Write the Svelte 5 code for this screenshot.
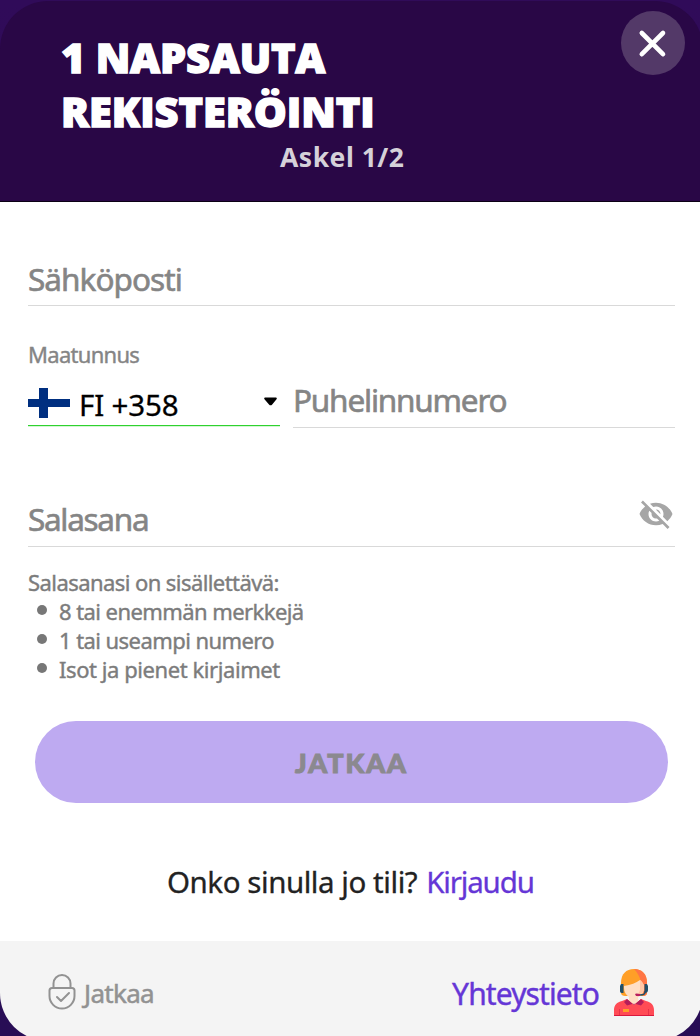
<script>
  const rules = ['8 tai enemmän merkkejä', '1 tai useampi numero', 'Isot ja pienet kirjaimet'];
</script>

<div class="backdrop">
  <main class="card">
    <header>
      <h1><span class="t1">1 NAPSAUTA</span><span class="t2">REKISTERÖINTI</span></h1>
      <p class="step"><span>Askel 1/2</span></p>
      <button class="close" aria-label="Sulje">
        <svg width="64" height="64" viewBox="0 0 64 64"><path d="M20.8 22 42 43.200M42 22 20.800 43.200" stroke="#fff" stroke-width="4.6" stroke-linecap="round" /></svg>
      </button>
    </header>

    <section class="form">
      <div class="field email"><span class="ph e">Sähköposti</span></div>
      <div class="label"><span>Maatunnus</span></div>
      <div class="phone">
        <div class="country">
          <svg class="flag" width="42" height="30" viewBox="0 0 42 30"><path fill="#fff" d="M0 0h42v30H0z" /><path fill="#002f80" d="M11 0h9v30h-9zM0 11h42v8H0z" /></svg>
          <span class="code">FI +358</span>
          <svg class="caret" width="13" height="9" viewBox="0 0 13 9"><path d="M1.6.5h9.800c1.500 0 1.800 1 .9 2L8.200 7.400c-1 1.200-2.200 1.200-3.200 0L.7 2.500c-.9-1-.6-2 .9-2z" /></svg>
        </div>
        <div class="number"><span class="ph n">Puhelinnumero</span></div>
      </div>
      <div class="field password">
        <span class="ph s">Salasana</span>
        <svg class="eye" width="36" height="36" viewBox="0 0 24 24" fill="#a6a6a6"><path d="M12 7c2.76 0 5 2.24 5 5 0 .65-.13 1.26-.36 1.83l2.92 2.92c1.51-1.26 2.7-2.89 3.43-4.75-1.73-4.39-6-7.5-11-7.5-1.4 0-2.74.25-3.98.7l2.16 2.16C10.74 7.13 11.35 7 12 7zM2 4.27l2.28 2.28.46.46C3.08 8.3 1.78 10.02 1 12c1.73 4.39 6 7.5 11 7.5 1.55 0 3.03-.3 4.38-.84l.42.42L19.73 22 21 20.73 3.27 3 2 4.27zM7.53 9.8l1.55 1.55c-.05.21-.08.43-.08.65 0 1.66 1.34 3 3 3 .22 0 .44-.03.65-.08l1.55 1.55c-.67.33-1.41.53-2.2.53-2.76 0-5-2.24-5-5 0-.79.2-1.53.53-2.2zm4.31-.78 3.15 3.15.02-.16c0-1.66-1.34-3-3-3l-.17.01z" /></svg>
      </div>
      <p class="hint"><span>Salasanasi on sisällettävä:</span></p>
      <ul>
        {#each rules as rule}<li><span>{rule}</span></li>{/each}
      </ul>
      <button class="submit"><span>JATKAA</span></button>
      <p class="login"><span class="q">Onko sinulla jo tili?</span><a href="#login">Kirjaudu</a></p>
    </section>

    <footer>
      <div class="continue">
        <svg width="28" height="36" viewBox="0 0 28 36" fill="none" stroke="#929292" stroke-width="2" stroke-linecap="round" stroke-linejoin="round"><path d="M5.5 14V9.5a8.5 8.5 0 0 1 17 0V14M4 14h20q2.500 0 2.500 2.500V22a12.500 12.500 0 0 1-25 0v-5.500Q1.500 14 4 14zM9 23l4 4 8-8" /></svg>
        <span>Jatkaa</span>
      </div>
      <div class="contact">
        <span>Yhteystieto</span>
        <svg width="40" height="48" viewBox="0 0 40 48">
          <path fill="#ff9f27" d="M7 24V14C7 5 12 0 20 0s13 5 13 14v10c0 2-2 3-4 3H11c-2 0-4-1-4-3z" />
          <path fill="#ff7544" d="M20 0c8 0 13 5 13 14v10c0 2-2 3-4 3l-2-14c-1-5-4-10-7-13z" />
          <path fill="#ffdfc4" d="M10 17c7-1 12-3 16-6 1 2 4 4 4 6v2c0 5-3 8-6 9v6l-4 5-5-5v-6c-3-2-5-5-5-9z" />
          <path fill="#ffc6a5" d="M26 11c2 1 4 4 4 7 0 5-3 9-7 10l3-7z" />
          <path fill="#224f68" d="M7 15h2.500v9H8c-2 0-2-1-2-3v-4zM30.500 15H33l1 2v4c0 2-1 3-3.500 3z" />
          <path fill="none" stroke="#224f68" stroke-width="1.5" d="M31 22v1c0 2-2 3-5 3" />
          <path fill="#b9205f" d="M21 25q1-1 5 0v2h-4z" />
          <path fill="#ff4b55" d="M0 47V41c0-5 3-8 8-9l5-2 7 6 7-6 5 2c5 1 8 4 8 9v6z" />
          <path fill="#d9183d" d="M0 46h40v1H0z" />
          <path fill="#e8324a" d="M5 40h1v6H5zM34 40h1v6h-1z" />
          <path fill="#b51d5a" d="m13 30 7 6 7-6 3 3-3 3.500-7-2-7 2-3-3.500z" />
          <path fill="#ffdfc4" d="M15 30h10l-5 5z" />
          <path fill="#ff9f27" d="M9 40h6v3H9z" />
        </svg>
      </div>
    </footer>
  </main>
</div>

<style>
  :global(body) { margin: 0; background: #2f0a5c; }
  * { box-sizing: border-box; }
  .backdrop { width: 700px; height: 1036px; overflow: hidden; padding-top: 1px; background: linear-gradient(#300b59, #280d55); font-family: "Noto Sans", sans-serif; }
  .card { width: 703px; height: 1040px; border-radius: 48px; overflow: hidden; display: flex; flex-direction: column; }
  span, a { white-space: nowrap; }
  p, h1, ul { margin: 0; padding: 0; }
  button { border: 0; padding: 0; font-family: inherit; }
  header { position: relative; height: 201px; flex: none; background: #290746; border-bottom: 1px solid #0b0015; padding: 29px 0 0 61px; }
  h1 { font: 800 41.5px/54px "Open Sans", sans-serif; color: #fff; display: flex; flex-direction: column; align-items: flex-start; -webkit-text-stroke: 1.4px #fff; }
  .t1 { letter-spacing: -0.2px; }
  .t2 { letter-spacing: -0.05px; }
  .step { font-size: 26.5px; line-height: 38px; font-weight: 700; color: #d5d1d9; padding-left: 219px; letter-spacing: 0.5px; }
  .close { position: absolute; left: 621px; top: 10px; width: 64px; height: 64px; border-radius: 50%; background: #533968; }
  .close svg { display: block; }
  .form { height: 739px; flex: none; padding: 0 28px; display: flex; flex-direction: column; background: #fff; }
  .field { width: 647px; border-bottom: 1px solid #d9d9d9; display: flex; flex: none; }
  .email { height: 104px; padding-top: 55px; }
  .ph { font-size: 31.5px; line-height: 44px; color: #858585; -webkit-text-stroke: 0.6px #858585; }
  .e { letter-spacing: -0.95px; }
  .n { letter-spacing: -1.2px; }
  .s { letter-spacing: -1.3px; }
  .label { margin-top: 32px; height: 33px; font-size: 22px; line-height: 32px; color: #858585; letter-spacing: -0.7px; -webkit-text-stroke: 0.4px #858585; }
  .phone { display: flex; gap: 13px; height: 57px; }
  .country { width: 252px; height: 55px; border-bottom: 1px solid #2fd12f; box-shadow: 0 1px #d3f7d3; display: flex; align-items: flex-start; }
  .flag { margin-top: 17px; flex: none; }
  .code { font-size: 29.5px; line-height: 42px; margin: 13px 0 0 9px; color: #000; width: 100px; letter-spacing: -0.15px; -webkit-text-stroke: 0.3px #000; }
  .caret { margin: 26px 0 0 85px; flex: none; }
  .number { width: 382px; border-bottom: 1px solid #d9d9d9; padding-top: 7px; }
  .password { height: 119px; padding-top: 69px; justify-content: space-between; }
  .eye { margin: -1px 1px 0 0; flex: none; }
  .hint, ul { font-size: 22px; line-height: 29px; color: #7c7c7c; letter-spacing: -0.57px; -webkit-text-stroke: 0.4px #7c7c7c; }
  .hint { margin-top: 21px; }
  ul { list-style: none; }
  li { height: 29px; display: flex; align-items: center; }
  li:last-child { letter-spacing: -0.43px; }
  li::before { content: ""; width: 10px; height: 10px; border-radius: 50%; background: #777; margin: -3px 12px 0 9px; }
  .submit { width: 633px; height: 82px; border-radius: 41px; background: #beaaf1; color: #8b898f; margin: 37px 0 0 7px; flex: none; font: 900 27px/40px Lato, sans-serif; letter-spacing: 1.9px; -webkit-text-stroke: 1px #8b898f; }
  .submit span { display: block; padding-top: 1px; }
  .login { margin-top: 58px; padding-left: 139px; display: flex; gap: 9px; font-size: 29.5px; line-height: 42px; color: #222; -webkit-text-stroke: 0.3px; }
  .q { letter-spacing: -0.45px; }
  a { color: #6536d6; text-decoration: none; letter-spacing: -1.15px; }
  footer { flex: 1; background: #f4f4f4; padding: 28px 49px 0 48px; display: flex; justify-content: space-between; align-items: flex-start; }
  .continue { display: flex; gap: 8px; color: #929292; font-size: 26px; line-height: 38px; padding-top: 5px; }
  .continue span { letter-spacing: -0.7px; -webkit-text-stroke: 0.5px #929292; }
  .contact { display: flex; gap: 15px; color: #6536d6; font-size: 30px; line-height: 42px; }
  .contact span { margin-top: 4px; letter-spacing: -0.9px; -webkit-text-stroke: 0.4px; }
  .contact svg { flex: none; }
</style>
